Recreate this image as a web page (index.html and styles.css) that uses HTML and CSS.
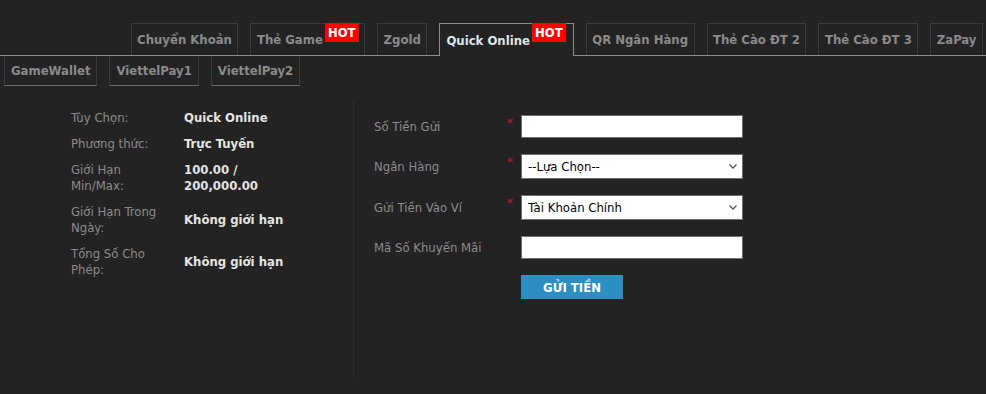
FILE: index.html
```html
<!DOCTYPE html>
<html lang="vi">
<head>
<meta charset="utf-8">
<title>Nạp tiền</title>
<link rel="stylesheet" href="styles.css">
</head>
<body>
<div class="tabs">
  <div class="tab-row top">
    <div class="tab">Chuyển Khoản</div>
    <div class="tab">Thẻ Game<span class="hot">HOT</span></div>
    <div class="tab">Zgold</div>
    <div class="tab active">Quick Online<span class="hot">HOT</span></div>
    <div class="tab">QR Ngân Hàng</div>
    <div class="tab">Thẻ Cào ĐT 2</div>
    <div class="tab">Thẻ Cào ĐT 3</div>
    <div class="tab">ZaPay</div>
  </div>
  <div class="tab-row bottom">
    <div class="tab2">GameWallet</div>
    <div class="tab2">ViettelPay1</div>
    <div class="tab2">ViettelPay2</div>
  </div>
</div>
<div class="content">
  <div class="info">
    <table class="info-table">
      <tr><td class="lbl">Tùy Chọn:</td><td class="val">Quick Online</td></tr>
      <tr><td class="lbl">Phương thức:</td><td class="val">Trực Tuyến</td></tr>
      <tr><td class="lbl">Giới Hạn<br>Min/Max:</td><td class="val">100.00 /<br>200,000.00</td></tr>
      <tr><td class="lbl">Giới Hạn Trong<br>Ngày:</td><td class="val">Không giới hạn</td></tr>
      <tr><td class="lbl">Tổng Số Cho<br>Phép:</td><td class="val">Không giới hạn</td></tr>
    </table>
  </div>
  <form class="form">
    <div class="frow">
      <label class="flabel">Số Tiền Gửi</label>
      <span class="req">*</span>
      <input class="field" type="text">
    </div>
    <div class="frow">
      <label class="flabel">Ngân Hàng</label>
      <span class="req">*</span>
      <select class="field sel"><option>--Lựa Chọn--</option></select>
    </div>
    <div class="frow">
      <label class="flabel">Gửi Tiền Vào Ví</label>
      <span class="req">*</span>
      <select class="field sel"><option>Tài Khoản Chính</option></select>
    </div>
    <div class="frow">
      <label class="flabel">Mã Số Khuyến Mãi</label>
      <span class="req"></span>
      <input class="field" type="text">
    </div>
    <div class="frow">
      <span class="flabel"></span>
      <span class="req"></span>
      <button class="btn" type="button">GỬI TIỀN</button>
    </div>
  </form>
</div>
</body>
</html>
```
FILE: styles.css
```css
html, body {
  margin: 0;
  padding: 0;
  background: #232323;
}
body {
  font-family: "DejaVu Sans Condensed", "DejaVu Sans", sans-serif;
  font-stretch: condensed;
  font-size: 13px;
  color: #8c8c8c;
  height: 394px;
  overflow: hidden;
}
.tab-row {
  display: flex;
  align-items: flex-start;
  gap: 12px;
}
.tab-row.top {
  justify-content: flex-end;
  padding: 23px 3px 0 0;
  border-bottom: 1px solid #8c8c8c;
  height: 32px;
}
.tab {
  box-sizing: border-box;
  height: 32px;
  display: flex;
  align-items: center;
  padding: 0 5.5px;
  border: 1px solid #3a3a3a;
  border-bottom: 0;
  font-weight: bold;
  color: #8a8a8a;
  white-space: nowrap;
}
.tab.active {
  height: 33px;
  margin-bottom: -1px;
  border-color: #8c8c8c;
  background: #232323;
  color: #dce4ec;
  padding: 0 7px 0 6px;
}
.hot {
  align-self: flex-start;
  margin: -1px 0 0 2px;
  height: 19px;
  line-height: 19px;
  padding: 0 3px;
  background: #ff0000;
  color: #ffffff;
  font-weight: bold;
}
.tab-row.bottom {
  padding-left: 4px;
}
.tab2 {
  box-sizing: border-box;
  height: 30px;
  display: flex;
  align-items: center;
  padding: 0 6px;
  border-left: 1px solid #3a3a3a;
  border-right: 1px solid #3a3a3a;
  border-bottom: 1px solid #6c6c6c;
  font-weight: bold;
  color: #8a8a8a;
}
.content {
  display: flex;
  margin-top: 14px;
}
.info {
  box-sizing: border-box;
  width: 354px;
  height: 278px;
  padding: 5px 0 0 71px;
  border-right: 1px solid #2f2f2f;
}
.info-table {
  border-collapse: collapse;
}
.info-table td {
  padding: 5px 0;
  line-height: 16px;
  vertical-align: middle;
}
.lbl {
  width: 113px;
  color: #8c8c8c;
}
.val {
  color: #e4e4e4;
  font-weight: bold;
}
.form {
  margin: 0;
  padding: 15px 0 0 20px;
  display: flex;
  flex-direction: column;
  gap: 16px;
}
.frow {
  display: flex;
  align-items: center;
}
.flabel {
  width: 133px;
  color: #8c8c8c;
}
.req {
  align-self: flex-start;
  width: 14px;
  line-height: 16px;
  color: #d0102a;
}
.field {
  box-sizing: border-box;
  width: 222px;
  height: 23px;
  margin: 0;
  border: 1px solid #6f6f6f;
  background: #ffffff;
  font-family: "DejaVu Sans Condensed", "DejaVu Sans", sans-serif;
  font-stretch: condensed;
  font-size: 13px;
  color: #000000;
}
.sel {
  height: 25px;
  padding: 0 0 0 6px;
  -webkit-appearance: none;
  appearance: none;
  background: #ffffff url("data:image/svg+xml,%3Csvg xmlns='http://www.w3.org/2000/svg' width='8' height='5' viewBox='0 0 8 5'%3E%3Cpath d='M0.5 0.5 L4 4 L7.5 0.5' fill='none' stroke='%23555' stroke-width='1.3'/%3E%3C/svg%3E") no-repeat right 5px center;
}
.btn {
  width: 102px;
  height: 24px;
  margin: 0;
  border: 0;
  background: #2b8fc1;
  color: #ffffff;
  font-family: "DejaVu Sans Condensed", "DejaVu Sans", sans-serif;
  font-stretch: condensed;
  font-weight: bold;
  font-size: 13px;
  padding: 0;
}
```
